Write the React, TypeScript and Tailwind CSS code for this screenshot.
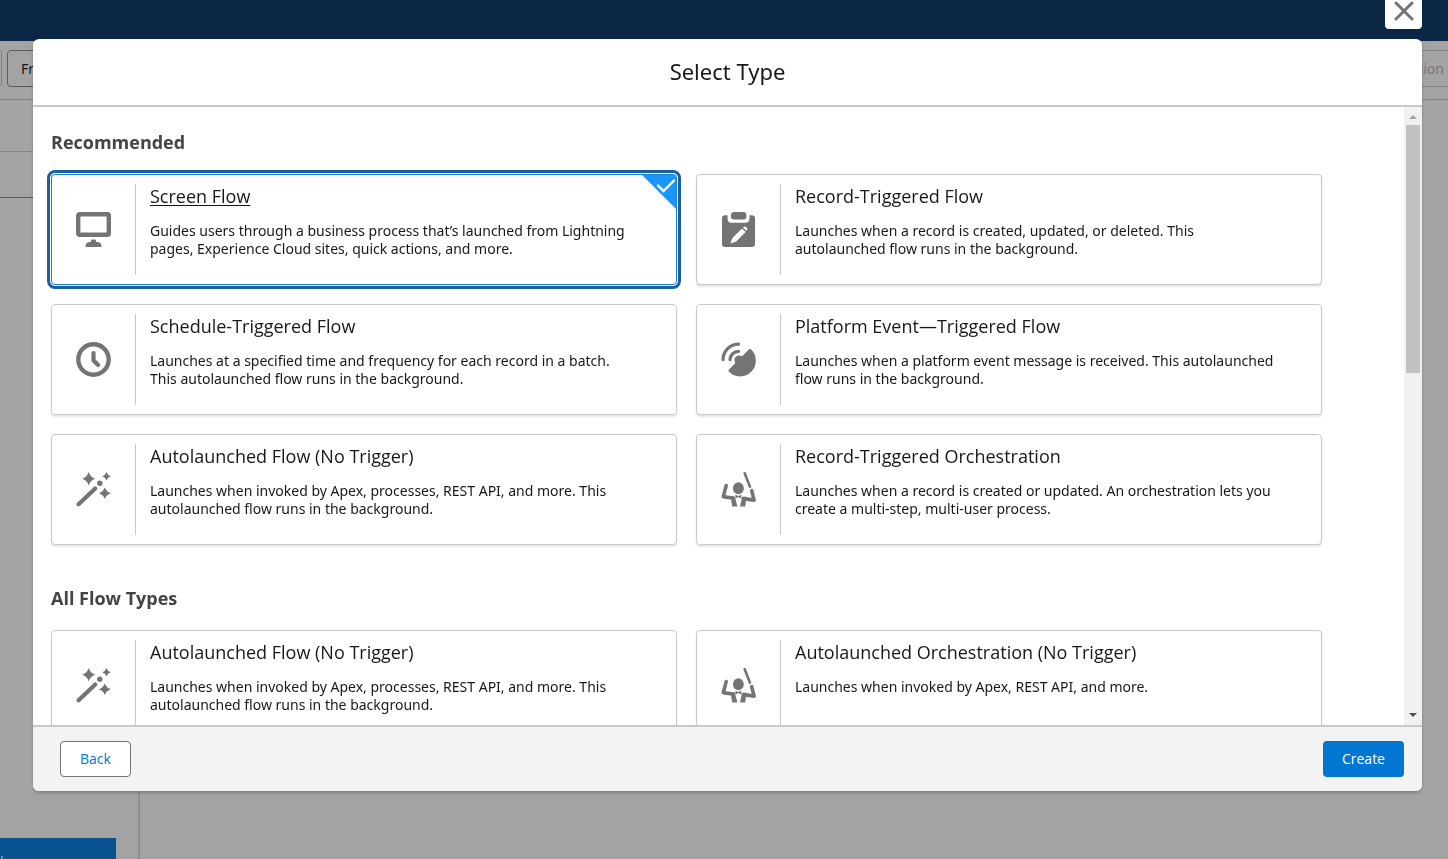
import React, { useState } from "react";

type IconName = "desktop" | "clipboard" | "clock" | "satellite" | "wand" | "conductor";

interface FlowType {
  id: string;
  icon: IconName;
  title: string;
  description: string;
}

const recommended: FlowType[] = [
  {
    id: "screen",
    icon: "desktop",
    title: "Screen Flow",
    description:
      "Guides users through a business process that’s launched from Lightning pages, Experience Cloud sites, quick actions, and more.",
  },
  {
    id: "record-triggered",
    icon: "clipboard",
    title: "Record-Triggered Flow",
    description:
      "Launches when a record is created, updated, or deleted. This autolaunched flow runs in the background.",
  },
  {
    id: "schedule-triggered",
    icon: "clock",
    title: "Schedule-Triggered Flow",
    description:
      "Launches at a specified time and frequency for each record in a batch. This autolaunched flow runs in the background.",
  },
  {
    id: "platform-event",
    icon: "satellite",
    title: "Platform Event—Triggered Flow",
    description:
      "Launches when a platform event message is received. This autolaunched flow runs in the background.",
  },
  {
    id: "autolaunched",
    icon: "wand",
    title: "Autolaunched Flow (No Trigger)",
    description:
      "Launches when invoked by Apex, processes, REST API, and more. This autolaunched flow runs in the background.",
  },
  {
    id: "record-orchestration",
    icon: "conductor",
    title: "Record-Triggered Orchestration",
    description:
      "Launches when a record is created or updated. An orchestration lets you create a multi-step, multi-user process.",
  },
];

const allTypes: FlowType[] = [
  {
    id: "all-autolaunched",
    icon: "wand",
    title: "Autolaunched Flow (No Trigger)",
    description:
      "Launches when invoked by Apex, processes, REST API, and more. This autolaunched flow runs in the background.",
  },
  {
    id: "all-orchestration",
    icon: "conductor",
    title: "Autolaunched Orchestration (No Trigger)",
    description: "Launches when invoked by Apex, REST API, and more.",
  },
];

const icons: Record<IconName, React.ReactNode> = {
  desktop: (
    <>
      <rect x="2.2" y="2.2" width="30.6" height="20.6" rx="1.5" fill="none" stroke="currentColor" strokeWidth="4.4" />
      <path d="M15 30v-1.200q0-1.300 1.300-1.300h2.400q1.300 0 1.300 1.300V30h1.500q4 .5 4 4v1h-16v-1q0-3.500 4-4z" />
    </>
  ),
  clipboard: (
    <>
      <rect x="10" y="0" width="15.400" height="7.400" rx="3" />
      <path
        fillRule="evenodd"
        d="M6.600 3.200H4A3 3 0 001 6.200V32a3 3 0 003 3h27a3 3 0 003-3V6.200a3 3 0 00-3-3h-2.600v3.600a4 4 0 01-4 4H10.600a4 4 0 01-4-4zM21 16.400l3.600 3.600-9.400 9.400-5 1.800q-.8.200-.6-.6l1.900-4.600zM22 15.500l.6-.6q1.100-1 2.200 0l1.100 1.100q1 1.100 0 2.200l-.6.600z"
      />
    </>
  ),
  clock: (
    <g fill="none" stroke="currentColor" strokeLinecap="round">
      <circle cx="17.500" cy="17.500" r="15.200" strokeWidth="4.400" />
      <path d="M17.500 11v7.400l4.600 4.600" strokeWidth="4.200" strokeLinejoin="round" />
    </g>
  ),
  satellite: (
    <>
      <path
        d="M2 17.600A15.700 15.700 0 0117.600 2.200M9 17.600A8.700 8.700 0 0117.600 9.300"
        fill="none"
        stroke="currentColor"
        strokeWidth="3.200"
        strokeLinecap="round"
      />
      <circle cx="18" cy="18" r="4.600" />
      <path d="M28 7.300q1.100-1 2.200.2A15.700 15.700 0 118 29.800q-1-1.200 0-2.200z" />
    </>
  ),
  wand: (
    <>
      <path d="M2.600 32.300L19.200 16.500" stroke="currentColor" strokeWidth="4.200" strokeLinecap="round" />
      <circle cx="23.800" cy="11.300" r="2.700" />
      <path d="M12.700 0q1.500 5.200 6.600 6.700-5.100 1.500-6.600 6.700-1.500-5.200-6.600-6.700Q11.200 5.200 12.700 0z" />
      <path d="M30.500 0q1 3.300 4.300 4.300-3.300 1-4.300 4.300-1-3.300-4.300-4.300 3.300-1 4.300-4.300z" />
      <path d="M28.800 15.300q1.400 4.500 5.900 5.900-4.500 1.400-5.900 5.900-1.400-4.500-5.900-5.900 4.500-1.400 5.900-5.900z" />
    </>
  ),
  conductor: (
    <>
      <ellipse cx="17.400" cy="16.200" rx="5.400" ry="6" />
      <g fill="none" stroke="currentColor" strokeLinecap="round" strokeLinejoin="round">
        <path d="M23.700 1.300L28.900 14.600" strokeWidth="2.600" />
        <path d="M5.200 13.600L2.300 24.600l9.200 1.400" strokeWidth="3.600" />
        <path d="M30.700 18.700l2.400 9.400-10.600-1.500" strokeWidth="3.600" />
      </g>
      <path d="M9.500 24.200h3.300q.9 0 1.200 1l2.400 9.300h-5.200z" />
      <path d="M25.300 24.800h-3.100q-1 0-1.200 1l-2 8.700h5.300z" />
      <path d="M14.400 22.800l3 1.300 3-1.300v3.600l-3-1.300-3 1.300z" />
    </>
  ),
};

const TypeIcon: React.FC<{ name: IconName }> = ({ name }) => (
  <svg viewBox="0 0 35 35" className="size-[35px] text-[#747474]" fill="currentColor" aria-hidden="true">
    {icons[name]}
  </svg>
);

interface CardProps {
  flow: FlowType;
  selected: boolean;
  onSelect: (id: string) => void;
}
const TypeCard: React.FC<CardProps> = ({ flow, selected, onSelect }) => {
  return (
    <label
      className={`relative flex min-h-[111px] cursor-pointer rounded border bg-white py-[9px] ${
        selected
          ? "border-[#1b7fd0] outline-3 outline-offset-1 outline-[#1a5fa5]"
          : "border-[#c9c9c9] shadow-[0_2px_2px_rgba(0,0,0,0.1)]"
      }`}
    >
      <input
        type="radio"
        name="flow-type"
        className="sr-only"
        checked={selected}
        onChange={() => onSelect(flow.id)}
      />
      <span className="flex w-[84px] shrink-0 items-center justify-center border-r border-[#c9c9c9]">
        <TypeIcon name={flow.icon} />
      </span>
      <span className="flex-1 pr-10 pl-[14px]">
        <span
          className={`block font-['Open_Sans','Segoe_UI',sans-serif] text-lg leading-6 text-[#181818] ${
            selected ? "underline underline-offset-2" : ""
          }`}
        >
          {flow.title}
        </span>
        <span className="mt-[14px] block text-sm leading-[18px] text-[#181818]">{flow.description}</span>
      </span>
      {selected && (
        <svg viewBox="0 0 34 34" className="absolute top-0 right-0 size-[34px]" aria-hidden="true">
          <path d="M0 0h34v34z" fill="#1b96ff" />
          <path d="M16 10.500l5.500 5.500L32 5.500" fill="none" stroke="#fff" strokeWidth="2.400" strokeLinecap="round" />
        </svg>
      )}
    </label>
  );
};

/* Builder page that sits dimmed under the dialog */
const Backdrop: React.FC = () => {
  return (
    <div className="flex min-h-screen flex-col bg-[#a3a3a3]" aria-hidden="true">
      <div className="h-[41px] bg-[#0b2545]" />
      <div className="flex h-[59px] items-center justify-between border-b border-[#858585] pb-[3px]">
        <div className="flex gap-[5px]">
          <div className="h-9 w-[2px] rounded-r border border-l-0 border-[#858585]" />
          <div className="flex h-[37px] w-24 items-center rounded border border-[#5c5c5c] pl-[13px] text-sm text-[#181818]">
            Freeform
          </div>
        </div>
        <div className="flex h-[37px] w-24 items-center justify-end border-y border-[#858585] pr-1 text-sm text-[#777777]">
          Version
        </div>
      </div>
      <div className="flex flex-1">
        <div className="flex w-[140px] flex-col border-r-2 border-[#8e8e8e]">
          <div className="h-[52px] border-b border-[#858585]" />
          <div className="h-[46px] border-b border-[#5c5c5c]" />
          <div className="flex-1" />
          <div className="mr-[22px] h-[21px] overflow-hidden bg-[#0a5391] pt-[14px] text-sm leading-5 text-[#8fa9c2]">l</div>
        </div>
      </div>
    </div>
  );
};

const ScrollTrack: React.FC = () => {
  return (
    <div className="flex w-[18px] shrink-0 flex-col items-center bg-[#f1f1f1]" aria-hidden="true">
      <svg viewBox="0 0 18 18" className="size-[18px]">
        <path d="M5 12l4-4 4 4z" fill="#a3a3a3" />
      </svg>
      <div className="h-[248px] w-[14px] bg-[#c1c1c1]" />
      <div className="flex-1" />
      <svg viewBox="0 0 18 18" className="size-[18px]">
        <path d="M5 6l4 4 4-4z" fill="#505050" />
      </svg>
    </div>
  );
};

export default function App() {
  const [selected, setSelected] = useState("screen");

  const renderGroup = (title: string, flows: FlowType[]) => (
    <section>
      <h3 className="font-['Open_Sans','Segoe_UI',sans-serif] text-lg leading-6 font-bold text-[#444444]">{title}</h3>
      <div className="mt-5 grid grid-cols-2 gap-[19px]">
        {flows.map((flow) => (
          <TypeCard key={flow.id} flow={flow} selected={selected === flow.id} onSelect={setSelected} />
        ))}
      </div>
    </section>
  );

  return (
    <div className="relative font-['Noto_Sans','Segoe_UI',sans-serif]">
      <Backdrop />

      <div className="fixed inset-0 pt-[39px] pr-[26px] pb-[68px] pl-[33px]">
        <div
          role="dialog"
          aria-labelledby="dialog-title"
          className="relative flex h-full flex-col rounded-md bg-white shadow-[0_2px_3px_rgba(0,0,0,0.2)]"
        >
          <button
            type="button"
            aria-label="Close"
            className="absolute right-0 bottom-full mb-[10px] flex size-[37px] items-center justify-center rounded bg-white"
          >
            <svg viewBox="0 0 20 20" className="size-5 text-[#747474]" aria-hidden="true">
              <path d="M2 2l16 16M18 2L2 18" stroke="currentColor" strokeWidth="3" strokeLinecap="round" />
            </svg>
          </button>

          <header className="flex h-[68px] shrink-0 items-center justify-center border-b-2 border-[#c9c9c9] pb-[2px]">
            <h2 id="dialog-title" className="text-[22px] leading-7 text-[#181818]">
              Select Type
            </h2>
          </header>

          <div className="flex min-h-0 flex-1">
            <div className="flex flex-1 flex-col gap-[41px] overflow-y-auto pt-[23px] pr-[82px] pb-6 pl-[18px] [scrollbar-width:none]">
              {renderGroup("Recommended", recommended)}
              {renderGroup("All Flow Types", allTypes)}
            </div>
            <ScrollTrack />
          </div>

          <footer className="flex h-[66px] shrink-0 items-center justify-between rounded-b-md border-t-2 border-[#c9c9c9] bg-[#f3f3f3] pr-[18px] pl-[27px] font-['Open_Sans','Segoe_UI',sans-serif]">
            <button
              type="button"
              className="h-9 rounded border border-[#747474] bg-white px-[19px] text-sm text-[#0176d3]"
            >
              Back
            </button>
            <button type="button" className="h-9 rounded bg-[#0176d3] px-[19px] text-sm text-white">
              Create
            </button>
          </footer>
        </div>
      </div>
    </div>
  );
}
